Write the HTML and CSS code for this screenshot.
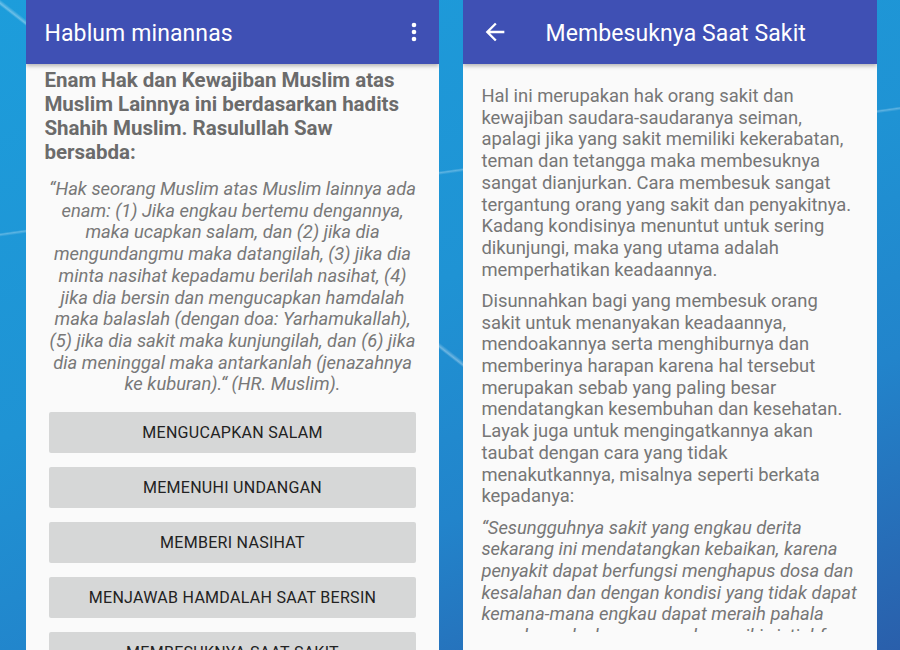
FILE: index.html
```html
<!DOCTYPE html>
<html lang="id">
<head>
<meta charset="utf-8">
<title>Hablum minannas</title>
<link rel="stylesheet" href="styles.css">
</head>
<body>
<div class="screens">
  <section class="phone">
    <header class="appbar">
      <h1 class="appbar-title">Hablum minannas</h1>
      <svg class="overflow-icon" width="10" height="28" viewBox="0 0 10 28" aria-hidden="true">
        <circle cx="5" cy="7" r="2.3" fill="#fff"/>
        <circle cx="5" cy="14" r="2.3" fill="#fff"/>
        <circle cx="5" cy="21" r="2.3" fill="#fff"/>
      </svg>
    </header>
    <div class="home">
      <h2 class="home-heading">Enam Hak dan Kewajiban Muslim atas Muslim Lainnya ini berdasarkan hadits Shahih Muslim. Rasulullah Saw bersabda:</h2>
      <p class="home-quote">“Hak seorang Muslim atas Muslim lainnya ada enam: (1) Jika engkau bertemu dengannya, maka ucapkan salam, dan (2) jika dia mengundangmu maka datangilah, (3) jika dia minta nasihat kepadamu berilah nasihat, (4) jika dia bersin dan mengucapkan hamdalah maka balaslah (dengan doa: Yarhamukallah), (5) jika dia sakit maka kunjungilah, dan (6) jika dia meninggal maka antarkanlah (jenazahnya ke kuburan).“ (HR. Muslim).</p>
      <div class="menu">
        <button class="menu-btn">Mengucapkan Salam</button>
        <button class="menu-btn">Memenuhi Undangan</button>
        <button class="menu-btn">Memberi Nasihat</button>
        <button class="menu-btn">Menjawab Hamdalah Saat Bersin</button>
        <button class="menu-btn">Membesuknya Saat Sakit</button>
      </div>
    </div>
  </section>

  <section class="phone">
    <header class="appbar">
      <svg class="back-icon" width="28" height="28" viewBox="0 0 24 24" aria-hidden="true">
        <path d="M20 11H7.83l5.59-5.59L12 4l-8 8 8 8 1.41-1.41L7.83 13H20v-2z" fill="#fff"/>
      </svg>
      <h1 class="appbar-title detail-title">Membesuknya Saat Sakit</h1>
    </header>
    <div class="detail">
      <div class="detail-scroll">
        <p class="detail-text">Hal ini merupakan hak orang sakit dan kewajiban saudara-saudaranya seiman, apalagi jika yang sakit memiliki kekerabatan, teman dan tetangga maka membesuknya sangat dianjurkan. Cara membesuk sangat tergantung orang yang sakit dan penyakitnya. Kadang kondisinya menuntut untuk sering dikunjungi, maka yang utama adalah memperhatikan keadaannya.</p>
        <p class="detail-text">Disunnahkan bagi yang membesuk orang sakit untuk menanyakan keadaannya, mendoakannya serta menghiburnya dan memberinya harapan karena hal tersebut merupakan sebab yang paling besar mendatangkan kesembuhan dan kesehatan. Layak juga untuk mengingatkannya akan taubat dengan cara yang tidak menakutkannya, misalnya seperti berkata kepadanya:</p>
        <p class="detail-text detail-quote">“Sesungguhnya sakit yang engkau derita sekarang ini mendatangkan kebaikan, karena penyakit dapat berfungsi menghapus dosa dan kesalahan dan dengan kondisi yang tidak dapat kemana-mana engkau dapat meraih pahala yang banyak, dengan membaca zikir, istighfar dan doa.”</p>
      </div>
    </div>
  </section>
</div>
</body>
</html>
```

FILE: styles.css
```css
* { box-sizing: border-box; }

html, body {
  margin: 0;
  height: 650px;
  overflow: hidden;
}

body {
  font-family: Roboto, "Liberation Sans", sans-serif;
  background:
    linear-gradient(38deg, transparent 47.6%, rgba(255,255,255,0.35) 47.8%, transparent 48.1%),
    linear-gradient(172deg, transparent 30%, rgba(255,255,255,0.28) 30.2%, transparent 30.5%),
    linear-gradient(160deg, #1d9ddb 0%, #1f93d4 45%, #2284cb 70%, #2a5fab 100%);
}

.screens {
  display: flex;
  gap: 24px;
  padding-left: 26px;
  height: 650px;
}

.phone {
  display: flex;
  flex-direction: column;
  width: 413px;
  height: 650px;
  background: #fafafa;
  overflow: hidden;
}
.phone + .phone { width: 414px; }

.appbar {
  position: relative;
  flex: none;
  display: flex;
  align-items: center;
  height: 64px;
  padding: 0 18px 0 18.5px;
  background: #3f50b4;
  box-shadow: 0 2px 4px rgba(0,0,0,0.28);
  z-index: 1;
}

.appbar-title {
  flex: 1;
  margin: 0;
  padding-top: 2px;
  font-size: 23px;
  font-weight: 400;
  letter-spacing: 0.1px;
  color: #fff;
  line-height: 1;
}

.overflow-icon {
  flex: none;
  margin-right: 2px;
}

.back-icon {
  flex: none;
  margin-left: -1px;
}

.detail-title {
  margin-left: 37px;
}

/* left screen */
.home {
  padding: 4px 18.4px 0;
}

.home-heading {
  margin: 0;
  font-size: 20.5px;
  line-height: 24px;
  font-weight: 700;
  color: #6b6b6b;
}

.home-quote {
  margin: 14px 0 0;
  font-size: 18.4px;
  line-height: 21.7px;
  font-style: italic;
  text-align: center;
  color: #787878;
}

.menu {
  display: flex;
  flex-direction: column;
  gap: 13.8px;
  margin-top: 16.5px;
  padding: 0 4.6px;
}

.menu-btn {
  height: 41.4px;
  border: 0;
  border-radius: 2px;
  background: #d6d7d7;
  font-family: Roboto, "Liberation Sans", sans-serif;
  font-size: 16px;
  letter-spacing: 0.28px;
  color: #222;
  text-transform: uppercase;
  padding: 0;
}

/* right screen */
.detail {
  flex: 1;
  min-height: 0;
  display: flex;
  padding: 18.4px 18.4px;
}

.detail-scroll {
  flex: 1;
  overflow: hidden;
  padding-top: 2.6px;
}

.detail-text {
  margin: 0 0 9.6px;
  font-size: 18.4px;
  line-height: 21.7px;
  color: #767676;
}

.detail-quote {
  font-style: italic;
}
```
